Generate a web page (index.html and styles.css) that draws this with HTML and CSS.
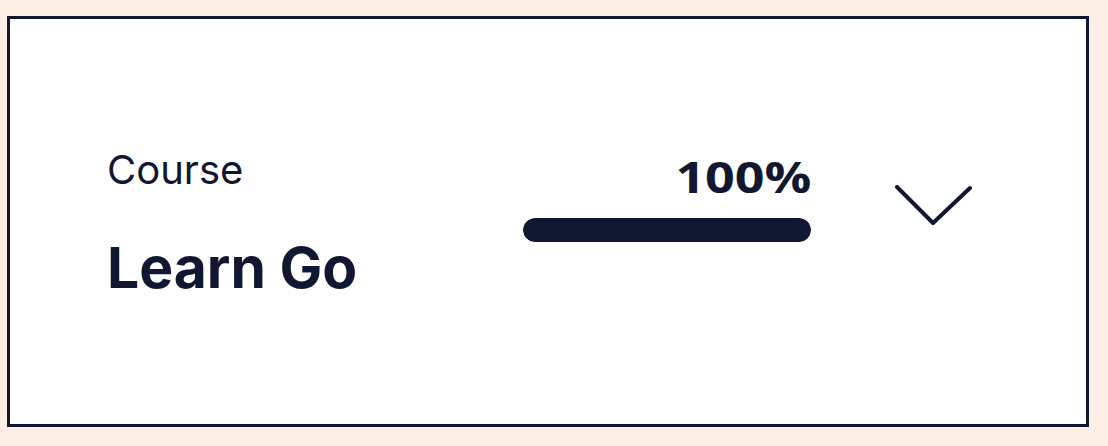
FILE: index.html
```html
<!DOCTYPE html>
<html lang="en">
<head>
  <meta charset="UTF-8" />
  <meta name="viewport" content="width=device-width, initial-scale=1.0" />
  <title>Course Progress</title>
  <link rel="stylesheet" href="styles.css">
</head>
<body>
  <div class="card">
    <div class="course">
      <div class="label">Course</div>
      <div class="name">Learn Go</div>
    </div>
    <div class="side">
      <div class="progress">
        <div class="percent"><span>100%</span></div>
        <div class="track"><div class="fill" style="width: 100%;"></div></div>
      </div>
      <button class="toggle" aria-label="Expand">
        <svg width="80" height="44" viewBox="0 0 80 44">
          <polyline points="4,2 40,38 77,3" fill="none" stroke="#111730" stroke-width="4" stroke-linecap="round" stroke-linejoin="round"/>
        </svg>
      </button>
    </div>
  </div>
</body>
</html>
```

FILE: styles.css
```css
body { margin: 0; padding: 16px 19px 18px 7px; background: #fdefe5;
  font-family: Inter, "Noto Sans", sans-serif; color: #111730; }
.card { height: 405px; background: #fff; border: 3px solid #111730;
  display: flex; align-items: center; justify-content: space-between;
  padding: 0 113px 0 97px; box-sizing: content-box; }
.course { padding-top: 3px; }
.label { font-size: 40px; line-height: 1; margin-bottom: 49px; }
.name { font-size: 57px; font-weight: 700; line-height: 1; }
.side { display: flex; align-items: flex-start; gap: 82px;
  align-self: flex-start; margin-top: 136px; }
.progress { width: 288px; display: flex; flex-direction: column; align-items: flex-end; }
.percent { font-family: "Open Sans", sans-serif; font-size: 43px; font-weight: 700;
  line-height: 1; margin-bottom: 20px; }
.percent span { display: inline-block; transform: scaleX(1.21); transform-origin: right center; }
.track { width: 100%; height: 24px; border-radius: 12px; background: #e5e7eb; overflow: hidden; }
.fill { height: 100%; background: #111730; border-radius: 12px; }
.toggle { background: none; border: 0; padding: 0; display: flex; margin-top: 30px; }
```
